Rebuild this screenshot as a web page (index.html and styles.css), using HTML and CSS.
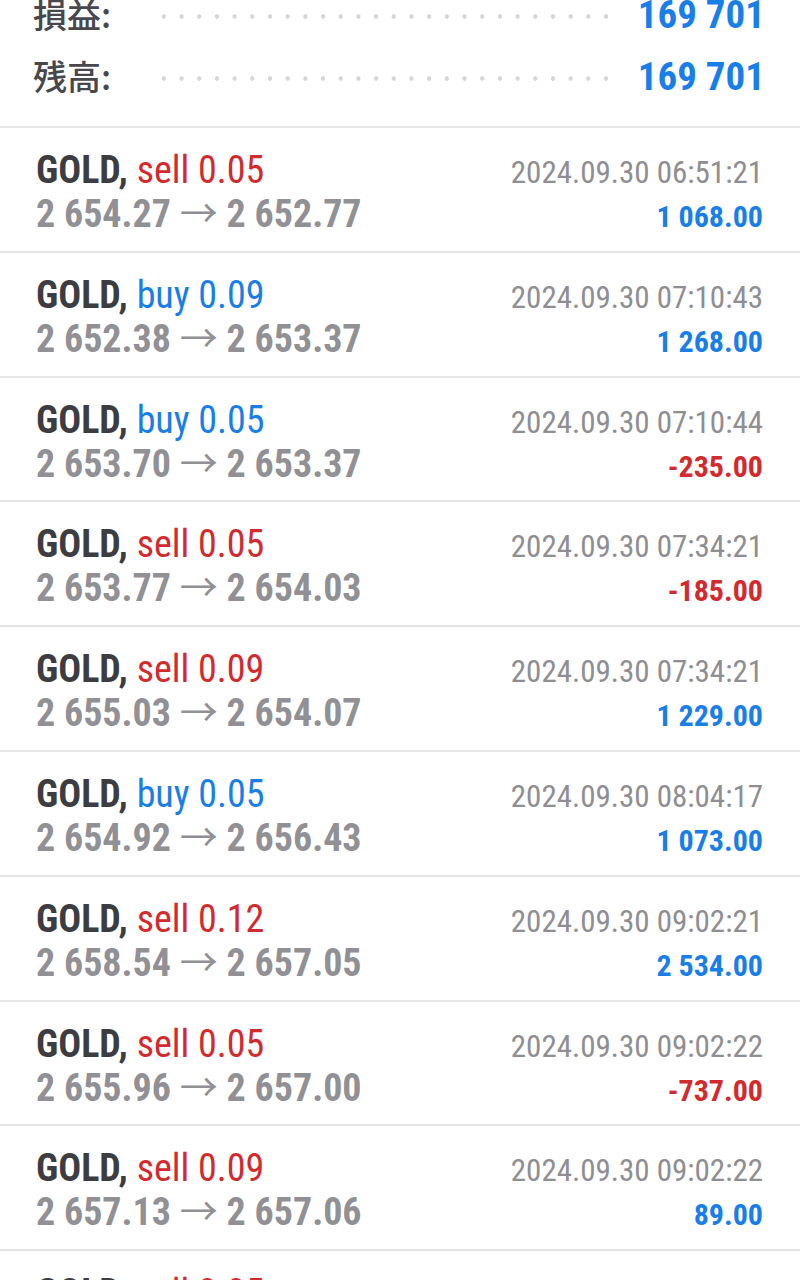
FILE: index.html
```html
<!DOCTYPE html>
<html lang="ja">
<head>
    <meta charset="UTF-8">
    <meta name="viewport" content="width=device-width, initial-scale=1.0">
    <title>履歴</title>
    <link rel="stylesheet" href="styles.css">
</head>
<body>
    <div class="summary">
        <div class="summary-row">
            <span class="summary-label">損益:</span>
            <span class="leader"></span>
            <span class="summary-value">169 701</span>
        </div>
        <div class="summary-row">
            <span class="summary-label">残高:</span>
            <span class="leader"></span>
            <span class="summary-value">169 701</span>
        </div>
    </div>

    <div class="deals">
        <div class="deal">
            <div class="line">
                <span class="cond left"><b class="symbol">GOLD,</b> <span class="sell">sell 0.05</span></span>
                <span class="cond right time">2024.09.30 06:51:21</span>
            </div>
            <div class="line">
                <span class="cond left prices">2 654.27 <span class="arrow">→</span> 2 652.77</span>
                <span class="cond right profit">1 068.00</span>
            </div>
        </div>
        <div class="deal">
            <div class="line">
                <span class="cond left"><b class="symbol">GOLD,</b> <span class="buy">buy 0.09</span></span>
                <span class="cond right time">2024.09.30 07:10:43</span>
            </div>
            <div class="line">
                <span class="cond left prices">2 652.38 <span class="arrow">→</span> 2 653.37</span>
                <span class="cond right profit">1 268.00</span>
            </div>
        </div>
        <div class="deal">
            <div class="line">
                <span class="cond left"><b class="symbol">GOLD,</b> <span class="buy">buy 0.05</span></span>
                <span class="cond right time">2024.09.30 07:10:44</span>
            </div>
            <div class="line">
                <span class="cond left prices">2 653.70 <span class="arrow">→</span> 2 653.37</span>
                <span class="cond right profit loss">-235.00</span>
            </div>
        </div>
        <div class="deal">
            <div class="line">
                <span class="cond left"><b class="symbol">GOLD,</b> <span class="sell">sell 0.05</span></span>
                <span class="cond right time">2024.09.30 07:34:21</span>
            </div>
            <div class="line">
                <span class="cond left prices">2 653.77 <span class="arrow">→</span> 2 654.03</span>
                <span class="cond right profit loss">-185.00</span>
            </div>
        </div>
        <div class="deal">
            <div class="line">
                <span class="cond left"><b class="symbol">GOLD,</b> <span class="sell">sell 0.09</span></span>
                <span class="cond right time">2024.09.30 07:34:21</span>
            </div>
            <div class="line">
                <span class="cond left prices">2 655.03 <span class="arrow">→</span> 2 654.07</span>
                <span class="cond right profit">1 229.00</span>
            </div>
        </div>
        <div class="deal">
            <div class="line">
                <span class="cond left"><b class="symbol">GOLD,</b> <span class="buy">buy 0.05</span></span>
                <span class="cond right time">2024.09.30 08:04:17</span>
            </div>
            <div class="line">
                <span class="cond left prices">2 654.92 <span class="arrow">→</span> 2 656.43</span>
                <span class="cond right profit">1 073.00</span>
            </div>
        </div>
        <div class="deal">
            <div class="line">
                <span class="cond left"><b class="symbol">GOLD,</b> <span class="sell">sell 0.12</span></span>
                <span class="cond right time">2024.09.30 09:02:21</span>
            </div>
            <div class="line">
                <span class="cond left prices">2 658.54 <span class="arrow">→</span> 2 657.05</span>
                <span class="cond right profit">2 534.00</span>
            </div>
        </div>
        <div class="deal">
            <div class="line">
                <span class="cond left"><b class="symbol">GOLD,</b> <span class="sell">sell 0.05</span></span>
                <span class="cond right time">2024.09.30 09:02:22</span>
            </div>
            <div class="line">
                <span class="cond left prices">2 655.96 <span class="arrow">→</span> 2 657.00</span>
                <span class="cond right profit loss">-737.00</span>
            </div>
        </div>
        <div class="deal">
            <div class="line">
                <span class="cond left"><b class="symbol">GOLD,</b> <span class="sell">sell 0.09</span></span>
                <span class="cond right time">2024.09.30 09:02:22</span>
            </div>
            <div class="line">
                <span class="cond left prices">2 657.13 <span class="arrow">→</span> 2 657.06</span>
                <span class="cond right profit">89.00</span>
            </div>
        </div>
        <div class="deal">
            <div class="line">
                <span class="cond left"><b class="symbol">GOLD,</b> <span class="sell">sell 0.05</span></span>
                <span class="cond right time">2024.09.30 09:02:23</span>
            </div>
            <div class="line">
                <span class="cond left prices">2 657.10 <span class="arrow">→</span> 2 657.12</span>
                <span class="cond right profit">2.00</span>
            </div>
        </div>
    </div>
</body>
</html>
```

FILE: styles.css
```css
body {
    margin: 0;
    background-color: #ffffff;
    font-family: Roboto, "Noto Sans CJK JP", sans-serif;
    overflow: hidden;
}

/* summary block (scrolled, top is cut off) */
.summary {
    margin-top: -17px;
    padding: 0 35px 19px 33px;
    border-bottom: 2px solid #e4e4e6;
}

.summary-row {
    display: flex;
    align-items: baseline;
    height: 62px;
    line-height: 62px;
}

.summary-label {
    font-family: "Noto Sans CJK JP", sans-serif;
    font-size: 34px;
    font-weight: 500;
    color: #47474c;
}

.leader {
    flex: 1;
    align-self: center;
    height: 5px;
    margin: 4px 30px 0 44px;
    background-image: radial-gradient(circle, #d6d6d8 2px, transparent 2.5px);
    background-size: 17.7px 5px;
    background-repeat: repeat-x;
}

.summary-value {
    font-size: 39px;
    font-weight: 700;
    color: #1a7ee8;
    font-stretch: 87%;
}

/* deals list */
.deal {
    box-sizing: border-box;
    height: 124.8px;
    padding: 20px 37px 0 36px;
    border-bottom: 2px solid #e4e4e6;
}

.line {
    display: flex;
    justify-content: space-between;
    align-items: baseline;
    height: 44px;
    line-height: 44px;
    white-space: nowrap;
}

.cond {
    font-stretch: 81%;
}

.left {
    font-size: 38px;
}

.symbol {
    font-weight: 700;
    color: #3c3c41;
}

.sell {
    color: #d12a2f;
}

.buy {
    color: #1a7ee8;
}

.prices {
    font-weight: 700;
    color: #909095;
}

.arrow {
    font-weight: 400;
}

.time {
    font-size: 31px;
    font-stretch: 82%;
    color: #8e8e93;
}

.profit {
    font-size: 30px;
    font-weight: 700;
    color: #1a7ee8;
}

.profit.loss {
    color: #d12a2f;
}
```
